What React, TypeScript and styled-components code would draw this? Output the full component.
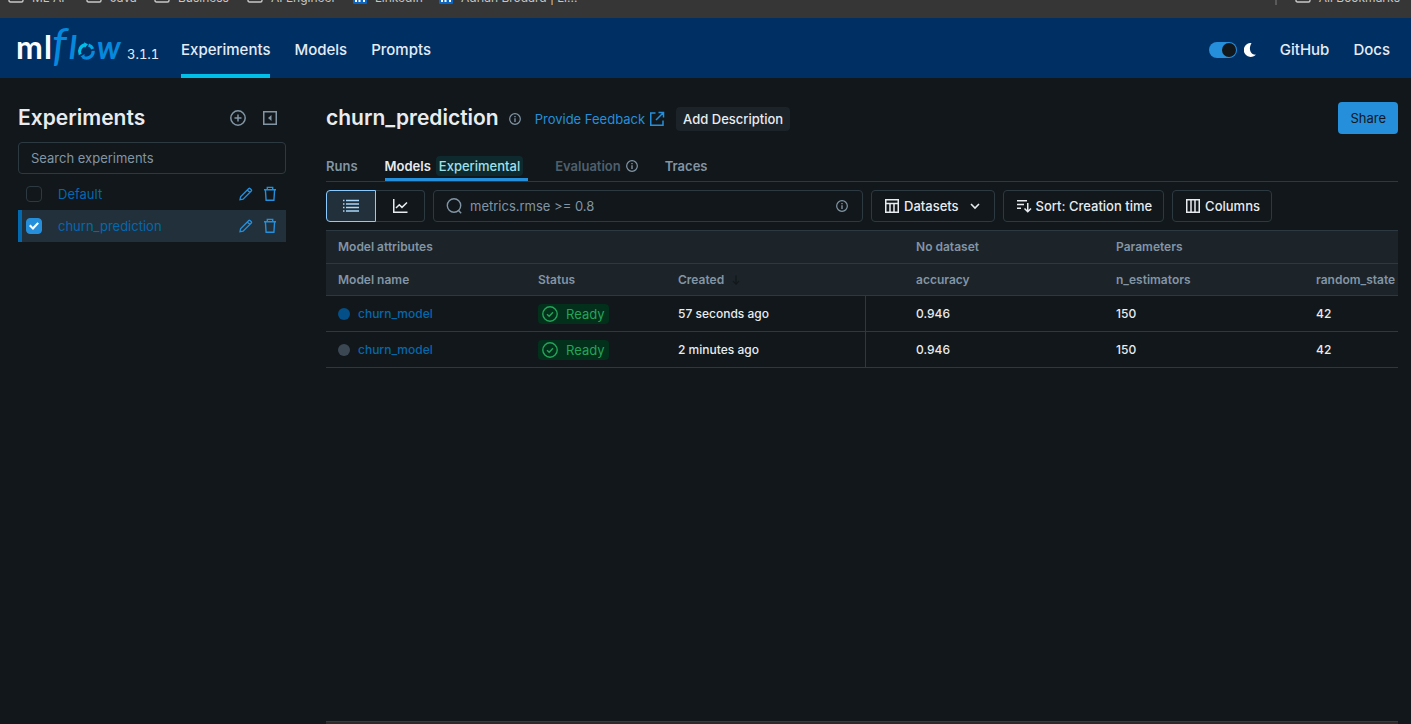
import React from "react";
import styled, { createGlobalStyle } from "styled-components";

const c = {
  bg: "#11171a",
  header: "#002f64",
  raised: "#1c2329",
  border: "#2d3941",
  muted: "#8295a5",
  dim: "#4f606d",
  text: "#e8ecf0",
  blue: "#258fdc",
  link: "#0468ae",
  selected: "#22303b",
};

const GlobalStyle = createGlobalStyle`
  *, *::before, *::after { box-sizing: border-box; }
  body {
    margin: 0;
    background: ${c.bg};
    color: ${c.text};
    font-family: Inter, "Liberation Sans", sans-serif;
    font-size: 13px;
    line-height: 20px;
  }
  button, input { font: inherit; color: inherit; }
  button { cursor: pointer; }
  a { text-decoration: none; }
  svg { display: block; flex: none; }
`;

const Page = styled.div`
  display: flex;
  flex-direction: column;
  min-height: 100vh;
  overflow: hidden;
`;

/* Browser bookmarks strip, scrolled mostly out of view */
const BookmarksBar = styled.nav`
  display: flex;
  justify-content: space-between;
  height: 18px;
  padding: 0 11px 0 8px;
  overflow: hidden;
  background: #363636;
  color: #c7c7c7;
  font-size: 12px;
  line-height: 16px;
`;

const BookmarkGroup = styled.div`
  display: flex;
  gap: 18px;
  height: 16px;
  margin-top: -10px;
`;

const Bookmark = styled.a<{ $w?: number }>`
  display: flex;
  gap: 8px;
  width: ${(p) => (p.$w ? `${p.$w}px` : "auto")};
  color: inherit;
  white-space: nowrap;
`;

const Divider = styled.span`
  width: 2px;
  height: 15px;
  background: #5a5a5a;
`;

const Header = styled.header`
  display: flex;
  align-items: stretch;
  height: 60px;
  padding: 0 21px 0 16px;
  background: ${c.header};
`;

const Brand = styled.a`
  display: flex;
  align-items: center;
  gap: 3px;
  width: 165px;
  color: #e4ecf5;
`;

const Version = styled.span`
  padding-top: 12px;
  font-size: 13px;
  font-variant-numeric: tabular-nums;
`;

const HeaderNav = styled.nav`
  display: flex;
  gap: 24px;
`;

const HeaderLink = styled.a<{ $active?: boolean }>`
  display: flex;
  align-items: center;
  padding-top: 8px;
  border-bottom: 4px solid ${(p) => (p.$active ? "#00bfe8" : "transparent")};
  color: #e4ecf5;
  font-size: 15px;
  font-weight: 500;
`;

const HeaderEnd = styled.div`
  display: flex;
  gap: 24px;
  margin-left: auto;
`;

const ThemeSwitch = styled.label`
  display: flex;
  align-items: center;
  gap: 7px;
  padding: 8px 0 4px;
`;

const SwitchInput = styled.input`
  appearance: none;
  display: flex;
  justify-content: flex-end;
  width: 28px;
  height: 16px;
  margin: 0;
  padding: 1px;
  border-radius: 8px;
  background: ${c.blue};
  &::before {
    content: "";
    width: 14px;
    height: 14px;
    border-radius: 50%;
    background: ${c.bg};
  }
`;

const Body = styled.div`
  display: flex;
  flex: 1;
  gap: 40px;
  padding: 24px 13px 0 18px;
`;

const Sidebar = styled.aside`
  flex: none;
  width: 268px;
`;

const SideHead = styled.div`
  display: flex;
  align-items: center;
  gap: 16px;
  height: 32px;
  padding-right: 8px;
`;

const Title = styled.h1`
  margin: 0;
  font-size: 21px;
  line-height: 28px;
  font-weight: 600;
`;

const SideTitle = styled(Title).attrs({ as: "h2" })`
  margin-right: auto;
`;

const IconButton = styled.button<{ $color?: string }>`
  display: flex;
  padding: 0;
  border: 0;
  background: none;
  color: ${(p) => p.$color ?? c.muted};
`;

const SideSearch = styled.input`
  display: block;
  width: 100%;
  height: 32px;
  margin: 8px 0 4px;
  padding: 0 12px;
  border: 1px solid ${c.border};
  border-radius: 4px;
  background: transparent;
  &::placeholder { color: ${c.muted}; opacity: 1; }
`;

const ExperimentList = styled.ul`
  margin: 0;
  padding: 0;
  list-style: none;
`;

const ExperimentRow = styled.li<{ $active?: boolean }>`
  display: flex;
  align-items: center;
  height: 32px;
  padding: 0 8px 0 4px;
  border-left: 4px solid ${(p) => (p.$active ? c.link : "transparent")};
  background: ${(p) => (p.$active ? c.selected : "transparent")};
`;

const Checkbox = styled.input`
  appearance: none;
  display: grid;
  place-items: center;
  width: 16px;
  height: 16px;
  margin: 0 16px 0 0;
  border: 1px solid ${c.border};
  border-radius: 4px;
  &:checked {
    border-color: ${c.blue};
    background: ${c.blue};
  }
  &:checked::before {
    content: "";
    width: 10px;
    height: 8px;
    background: #fff;
    clip-path: polygon(0 50%, 16% 32%, 38% 62%, 84% 2%, 100% 18%, 40% 100%);
  }
`;

const ExperimentLink = styled.a`
  flex: 1;
  color: ${c.link};
`;

const RowActions = styled.div`
  display: flex;
  gap: 8px;
`;

const Main = styled.main`
  display: flex;
  flex: 1;
  flex-direction: column;
  min-width: 0;
`;

const TitleBar = styled.div`
  display: flex;
  align-items: center;
  height: 32px;
`;

const InfoButton = styled(IconButton)`
  margin: 2px 14px 0 10px;
`;

const FeedbackLink = styled.a`
  display: flex;
  align-items: center;
  gap: 4px;
  margin-right: 11px;
  padding-top: 2px;
  color: ${c.blue};
`;

const DescriptionButton = styled.button`
  height: 24px;
  margin-top: 2px;
  padding: 0 7px;
  border: 0;
  border-radius: 4px;
  background: ${c.raised};
  font-weight: 500;
`;

const ShareButton = styled.button`
  height: 32px;
  margin-left: auto;
  padding: 0 12px;
  border: 0;
  border-radius: 4px;
  background: ${c.blue};
  color: ${c.bg};
`;

const Tabs = styled.div`
  display: flex;
  gap: 27px;
  height: 32px;
  margin: 16px 0 8px;
  border-bottom: 1px solid ${c.border};
`;

const Tab = styled.button<{ $active?: boolean }>`
  display: flex;
  align-items: center;
  gap: 5px;
  height: 31px;
  padding: ${(p) => (p.$active ? "3px 5px 0 0" : "3px 0 0")};
  border: 0;
  border-bottom: 3px solid ${(p) => (p.$active ? c.blue : "transparent")};
  background: none;
  color: ${(p) => (p.$active ? c.text : c.muted)};
  font-weight: 600;
  &:disabled { color: ${c.dim}; }
  svg { color: ${c.muted}; }
`;

const Tag = styled.span`
  padding: 0 3px;
  border-radius: 4px;
  background: #0f2a2f;
  color: #9fe0ea;
  font-weight: 500;
`;

const Toolbar = styled.div`
  display: flex;
  gap: 8px;
  margin-bottom: 8px;
`;

const Segmented = styled.div`
  display: flex;
`;

const Segment = styled.button<{ $active?: boolean }>`
  display: grid;
  place-items: center;
  width: ${(p) => (p.$active ? 50 : 49)}px;
  height: 32px;
  padding: 0;
  border: 1px solid ${(p) => (p.$active ? "#8acaff" : c.border)};
  border-left-width: ${(p) => (p.$active ? 1 : 0)}px;
  border-radius: ${(p) => (p.$active ? "4px 0 0 4px" : "0 4px 4px 0")};
  background: ${(p) => (p.$active ? c.selected : "transparent")};
  color: ${(p) => (p.$active ? "#a8d8fb" : c.text)};
`;

const FilterBox = styled.label`
  display: flex;
  align-items: center;
  gap: 8px;
  width: 430px;
  height: 32px;
  padding: 0 14px 0 12px;
  border: 1px solid ${c.border};
  border-radius: 4px;
  color: ${c.muted};
`;

const FilterInput = styled.input`
  flex: 1;
  min-width: 0;
  padding: 0;
  border: 0;
  outline: 0;
  background: none;
  &::placeholder { color: ${c.muted}; opacity: 1; }
`;

const ToolButton = styled.button`
  display: flex;
  align-items: center;
  gap: 4px;
  height: 32px;
  padding: 0 11px 0 12px;
  border: 1px solid ${c.border};
  border-radius: 4px;
  background: transparent;
  font-weight: 500;
  white-space: nowrap;
`;

const Caret = styled.span`
  padding-left: 4px;
`;

const TableViewport = styled.div`
  overflow: hidden;
  border-top: 1px solid ${c.border};
`;

const Table = styled.table`
  width: 1178px;
  table-layout: fixed;
  border-collapse: separate;
  border-spacing: 0;
  text-align: left;
`;

const HeadCell = styled.th<{ $h: number }>`
  height: ${(p) => p.$h}px;
  padding: 0 12px;
  border-bottom: 1px solid ${c.border};
  background: ${c.raised};
  color: ${c.muted};
  font-size: 12px;
  font-weight: 600;
`;

const SortLabel = styled.span`
  display: flex;
  align-items: center;
  gap: 6px;
  svg { color: ${c.bg}; }
`;

const Cell = styled.td<{ $divided?: boolean }>`
  height: 36px;
  padding: 0 12px;
  border-bottom: 1px solid ${c.border};
  border-right: ${(p) => (p.$divided ? `1px solid ${c.border}` : "0")};
  font-size: 12px;
  font-weight: 500;
`;

const ModelLink = styled.a`
  display: flex;
  align-items: center;
  gap: 8px;
  color: ${c.link};
`;

const Dot = styled.span<{ $color: string }>`
  width: 12px;
  height: 12px;
  border-radius: 50%;
  background: ${(p) => p.$color};
`;

const Status = styled.span`
  display: inline-flex;
  align-items: center;
  gap: 8px;
  padding: 0 4px;
  border-radius: 4px;
  background: #02301a;
  color: #27a35a;
  font-size: 13px;
  font-weight: 400;
  vertical-align: middle;
`;

const ScrollTrack = styled.div`
  height: 3px;
  margin-top: auto;
  border-top: 1px solid #393939;
  background: #2b2a2a;
`;

const Folder = () => (
  <svg width="16" height="13" viewBox="0 0 16 13" fill="none" stroke="currentColor" strokeWidth="1.4">
    <path d="M1 2.5Q1 1 2.5 1H6l1.5 2h6Q15 3 15 4.5v6q0 1.5-1.5 1.5h-11Q1 12 1 10.500z" />
  </svg>
);

const LinkedIn = () => (
  <svg width="14" height="14" viewBox="0 0 14 14">
    <rect width="14" height="14" rx="1" fill="#0a66c2" />
    <path d="M2 5h2v7H2zM2 2h2v2H2zM5.500 5h2v1c1-1.600 4.500-1.600 4.500 1.500V12h-2V8c0-1.700-2.500-1.700-2.500 0v4h-2z" fill="#fff" />
  </svg>
);

const Logo = () => (
  <svg width="108" height="44" viewBox="0 0 108 44" role="img" aria-label="mlflow">
    <g fontFamily="Lato" fontSize="32">
      <text x="0" y="33" fill="#fff" fontWeight="700">m</text>
      <text x="28" y="33" fill="#fff" fontWeight="700">l</text>
      <g fill="#0689dd" fontStyle="italic" fontWeight="400">
        <text x="36" y="35" fontSize="46">f</text>
        <text x="53" y="33" fontWeight="700">l</text>
        <text x="81" y="33" fontWeight="700">w</text>
      </g>
    </g>
    <g fill="none" strokeWidth="3.200">
      <path d="M64.200 28.500A6.800 6.800 0 0 1 69 18.900" stroke="#00bfe8" />
      <path d="M72.500 19A6.800 6.800 0 0 1 76.700 22.800" stroke="#00a8e4" />
      <path d="M77.200 24.800A6.800 6.800 0 0 1 66.800 31" stroke="#0689dd" />
    </g>
    <path d="M68 16.300l4 2-3.200 3.600z" fill="#00bfe8" />
    <path d="M68.500 33.500l-4-3 4-2.500z" fill="#0689dd" />
  </svg>
);

const Moon = () => (
  <svg width="12" height="14" viewBox="0 0 12 14" fill="#fff">
    <path d="M7.500 0A7 7 0 1 0 12 11.600C7.500 12.300 3.600 7 7.500 0z" />
  </svg>
);

type IconProps = { size?: number; children: React.ReactNode; width?: number };
const Icon = ({ size = 16, width = 1.5, children }: IconProps) => (
  <svg width={size} height={size} viewBox="0 0 16 16" fill="none" stroke="currentColor" strokeWidth={width} aria-hidden="true">
    {children}
  </svg>
);

const InfoIcon = () => (
  <Icon size={12} width={1.6}>
    <circle cx="8" cy="8" r="7.100" />
    <path d="M8 7v5M8 4v1.800" strokeWidth="1.800" />
  </Icon>
);
const PlusCircle = () => (
  <Icon><circle cx="8" cy="8" r="7.200" /><path d="M8 4.500v7M4.500 8h7" /></Icon>
);
const Collapse = () => (
  <Icon><path d="M1.750 1.750h12.500v12.500H1.750z" /><path d="M9.500 5v6L6 8z" fill="currentColor" stroke="none" /></Icon>
);
const Pencil = () => (
  <Icon width={1.3}><path d="M2.600 10.700l8.200-8.200q.6-.6 1.200 0l1.300 1.300q.6.600 0 1.200l-8.200 8.200-3.100.6zM9.300 4l2.500 2.500" /></Icon>
);
const Trash = () => (
  <Icon width={1.4}><path d="M2 3.700h12M5.300 3.500V1.400h5.400v2.100M3.400 3.700l.7 10.600h7.800l.7-10.600" /></Icon>
);
const External = () => (
  <Icon><path d="M6.500 2H1.750v12.250H14V9.500M9.500 1.500h5v5M14.500 1.500L7 9" /></Icon>
);
const ListIcon = () => (
  <Icon width={1.3}><path d="M3 2.500h13M3 6h13M3 9.500h13M3 13h13M0 2.500h1.500M0 6h1.500M0 9.500h1.500M0 13h1.500" /></Icon>
);
const ChartIcon = () => (
  <Icon><path d="M1.750 1v13.250H15.500M4 10l3.300-3.300 2.700 2.700L15 4.500" /></Icon>
);
const SearchIcon = () => (
  <Icon width={1.4}><circle cx="8" cy="7.500" r="6.700" /><path d="M12.500 12.500l2.700 2.700" /></Icon>
);
const TableIcon = () => (
  <Icon><path d="M1.750 1.750h12.500v12.500H1.750zM1.750 5.500h12.500M6 5.500v8.700M10 5.500v8.700" /></Icon>
);
const ColumnsIcon = () => (
  <Icon><path d="M1.750 1.750h12.500v12.500H1.750zM6 1.750v12.500M10 1.750v12.500" /></Icon>
);
const SortIcon = () => (
  <Icon><path d="M1 2.750h10M1 6.500h7M1 10.250h4M11.750 5v8.500M8.500 10.500l3.250 3.250L15 10.500" /></Icon>
);
const ChevronDown = () => (
  <Icon width={1.6}><path d="M4 6l4 4 4-4" /></Icon>
);
const ArrowDown = () => (
  <Icon size={12}><path d="M8 2v11M4 9.500l4 4 4-4" /></Icon>
);
const CheckCircle = () => (
  <Icon width={1.4}><circle cx="8" cy="8" r="7.200" /><path d="M5 8.200l2.200 2L11 6.300" /></Icon>
);

const experiments = [
  { name: "Default", active: false },
  { name: "churn_prediction", active: true },
];

const models = [
  { id: 1, color: "#044f87", created: "57 seconds ago" },
  { id: 2, color: "#3b4854", created: "2 minutes ago" },
];

export default function App() {
  return (
    <Page>
      <GlobalStyle />
      <BookmarksBar aria-label="Bookmarks">
        <BookmarkGroup>
          <Bookmark href="#" $w={60}><Folder />ML AI</Bookmark>
          <Bookmark href="#" $w={50}><Folder />Java</Bookmark>
          <Bookmark href="#" $w={75}><Folder />Business</Bookmark>
          <Bookmark href="#" $w={88}><Folder />AI Engineer</Bookmark>
          <Bookmark href="#" $w={68}><LinkedIn />LinkedIn</Bookmark>
          <Bookmark href="#"><LinkedIn />Adrian Brodard | Li...</Bookmark>
        </BookmarkGroup>
        <BookmarkGroup>
          <Divider />
          <Bookmark href="#"><Folder />All Bookmarks</Bookmark>
        </BookmarkGroup>
      </BookmarksBar>

      <Header>
        <Brand href="#"><Logo /><Version>3.1.1</Version></Brand>
        <HeaderNav>
          <HeaderLink href="#" $active>Experiments</HeaderLink>
          <HeaderLink href="#">Models</HeaderLink>
          <HeaderLink href="#">Prompts</HeaderLink>
        </HeaderNav>
        <HeaderEnd>
          <ThemeSwitch>
            <SwitchInput type="checkbox" role="switch" defaultChecked aria-label="Dark mode" />
            <Moon />
          </ThemeSwitch>
          <HeaderLink href="#">GitHub</HeaderLink>
          <HeaderLink href="#">Docs</HeaderLink>
        </HeaderEnd>
      </Header>

      <Body>
        <Sidebar>
          <SideHead>
            <SideTitle>Experiments</SideTitle>
            <IconButton aria-label="Create experiment"><PlusCircle /></IconButton>
            <IconButton aria-label="Collapse sidebar"><Collapse /></IconButton>
          </SideHead>
          <SideSearch placeholder="Search experiments" aria-label="Search experiments" />
          <ExperimentList>
            {experiments.map((e) => (
              <ExperimentRow key={e.name} $active={e.active}>
                <Checkbox type="checkbox" defaultChecked={e.active} aria-label={e.name} />
                <ExperimentLink href="#">{e.name}</ExperimentLink>
                <RowActions>
                  <IconButton $color={c.blue} aria-label={`Rename ${e.name}`}><Pencil /></IconButton>
                  <IconButton $color={c.blue} aria-label={`Delete ${e.name}`}><Trash /></IconButton>
                </RowActions>
              </ExperimentRow>
            ))}
          </ExperimentList>
        </Sidebar>

        <Main>
          <TitleBar>
            <Title>churn_prediction</Title>
            <InfoButton aria-label="Experiment info"><InfoIcon /></InfoButton>
            <FeedbackLink href="#">Provide Feedback<External /></FeedbackLink>
            <DescriptionButton>Add Description</DescriptionButton>
            <ShareButton>Share</ShareButton>
          </TitleBar>

          <Tabs role="tablist">
            <Tab role="tab">Runs</Tab>
            <Tab role="tab" aria-selected="true" $active>Models<Tag>Experimental</Tag></Tab>
            <Tab role="tab" disabled>Evaluation<InfoIcon /></Tab>
            <Tab role="tab">Traces</Tab>
          </Tabs>

          <Toolbar>
            <Segmented>
              <Segment $active aria-label="Table view"><ListIcon /></Segment>
              <Segment aria-label="Chart view"><ChartIcon /></Segment>
            </Segmented>
            <FilterBox>
              <SearchIcon />
              <FilterInput placeholder="metrics.rmse >= 0.8" aria-label="Filter models" />
              <InfoIcon />
            </FilterBox>
            <ToolButton><TableIcon />Datasets<Caret><ChevronDown /></Caret></ToolButton>
            <ToolButton><SortIcon />Sort: Creation time</ToolButton>
            <ToolButton><ColumnsIcon />Columns</ToolButton>
          </Toolbar>

          <TableViewport>
            <Table>
              <colgroup>
                <col width="200" /><col width="140" /><col width="200" /><col width="38" />
                <col width="200" /><col width="200" /><col width="200" />
              </colgroup>
              <thead>
                <tr>
                  <HeadCell $h={33} colSpan={4}>Model attributes</HeadCell>
                  <HeadCell $h={33}>No dataset</HeadCell>
                  <HeadCell $h={33} colSpan={2}>Parameters</HeadCell>
                </tr>
                <tr>
                  <HeadCell $h={32}>Model name</HeadCell>
                  <HeadCell $h={32}>Status</HeadCell>
                  <HeadCell $h={32}><SortLabel>Created<ArrowDown /></SortLabel></HeadCell>
                  <HeadCell $h={32} />
                  <HeadCell $h={32}>accuracy</HeadCell>
                  <HeadCell $h={32}>n_estimators</HeadCell>
                  <HeadCell $h={32}>random_state</HeadCell>
                </tr>
              </thead>
              <tbody>
                {models.map((m) => (
                  <tr key={m.id}>
                    <Cell><ModelLink href="#"><Dot $color={m.color} />churn_model</ModelLink></Cell>
                    <Cell><Status><CheckCircle />Ready</Status></Cell>
                    <Cell $divided>{m.created}</Cell>
                    <Cell />
                    <Cell>0.946</Cell>
                    <Cell>150</Cell>
                    <Cell>42</Cell>
                  </tr>
                ))}
              </tbody>
            </Table>
          </TableViewport>
          <ScrollTrack />
        </Main>
      </Body>
    </Page>
  );
}
